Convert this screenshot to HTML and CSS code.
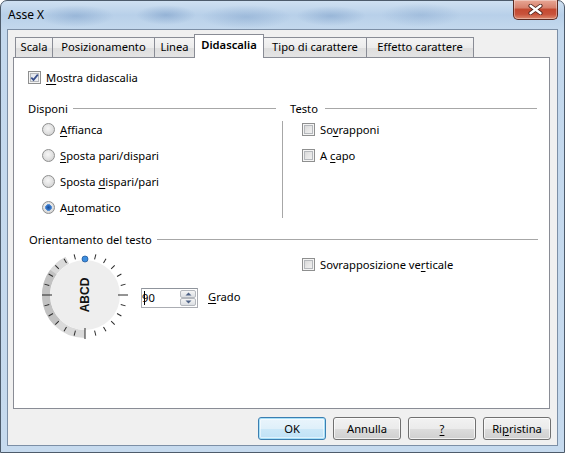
FILE: index.html
```html
<!DOCTYPE html>
<html lang="it">
<head>
<meta charset="utf-8">
<title>Asse X</title>
<link rel="stylesheet" href="styles.css">
</head>
<body>
<div class="window">
  <div class="titlebar">
    <span class="title">Asse X</span>
    <div class="close">
      <svg width="17" height="11" viewBox="0 0 17 11"><path d="M3.5 1.8 L13.5 9.2 M13.5 1.8 L3.5 9.2" fill="none" stroke="#4a1f18" stroke-width="4" stroke-linecap="round"/><path d="M3.5 1.8 L13.5 9.2 M13.5 1.8 L3.5 9.2" fill="none" stroke="#fff" stroke-width="2.4" stroke-linecap="round"/></svg>
    </div>
  </div>
  <div class="client">
    <div class="tabs">
      <div class="tab t1">Scala</div>
      <div class="tab t2">Posizionamento</div>
      <div class="tab t3">Linea</div>
      <div class="tab t4 active">Didascalia</div>
      <div class="tab t5">Tipo di carattere</div>
      <div class="tab t6">Effetto carattere</div>
    </div>
    <div class="panel">
      <div class="row first"><span class="cb checked"><svg width="11" height="11" viewBox="0 0 11 11"><path d="M2.3 5.6 L4.5 7.9 L8.8 2.6" fill="none" stroke="#394f8c" stroke-width="1.7"/></svg></span><span><u>M</u>ostra didascalia</span></div>

      <div class="cols">
        <div class="col-left">
          <div class="hdr"><span>Disponi</span><span class="rule"></span></div>
          <div class="list">
            <div class="row"><span class="rb"></span><span><u>A</u>ffianca</span></div>
            <div class="row"><span class="rb"></span><span><u>S</u>posta pari/dispari</span></div>
            <div class="row"><span class="rb"></span><span>Sposta <u>d</u>ispari/pari</span></div>
            <div class="row"><span class="rb on"></span><span>A<u>u</u>tomatico</span></div>
          </div>
        </div>
        <div class="col-right">
          <div class="hdr right-hdr"><span>Testo</span><span class="rule"></span></div>
          <div class="vbody">
            <div class="row"><span class="cb"></span><span>So<u>v</u>rapponi</span></div>
            <div class="row"><span class="cb"></span><span>A <u>c</u>apo</span></div>
          </div>
        </div>
      </div>

      <div class="hdr orient"><span>Orientamento del testo</span><span class="rule"></span></div>

      <div class="cols2">
        <div class="dialarea">
          <svg class="dial" width="96" height="96" viewBox="-48 -48 96 96">
            <circle r="39" fill="none" stroke="#dadada" stroke-width="8" stroke-dasharray="104 400" transform="rotate(90)"/>
            <circle r="39" fill="none" stroke="#c2c2c2" stroke-width="8" stroke-dasharray="55 400" transform="rotate(135)"/>
            <circle r="35" fill="#eeeeee"/>
            <g stroke="#2b2b2b" stroke-width="1">
              <line x1="33" y1="0" x2="43" y2="0"/>
              <line x1="33" y1="0" x2="43" y2="0" transform="rotate(180)"/>
              <line x1="33" y1="0" x2="44" y2="0" transform="rotate(90)"/>
              <line x1="37" y1="0" x2="42" y2="0" transform="rotate(15)"/>
              <line x1="37" y1="0" x2="42" y2="0" transform="rotate(30)"/>
              <line x1="37" y1="0" x2="42" y2="0" transform="rotate(45)"/>
              <line x1="37" y1="0" x2="42" y2="0" transform="rotate(60)"/>
              <line x1="37" y1="0" x2="42" y2="0" transform="rotate(75)"/>
              <line x1="37" y1="0" x2="42" y2="0" transform="rotate(105)"/>
              <line x1="37" y1="0" x2="42" y2="0" transform="rotate(120)"/>
              <line x1="37" y1="0" x2="42" y2="0" transform="rotate(135)"/>
              <line x1="37" y1="0" x2="42" y2="0" transform="rotate(150)"/>
              <line x1="37" y1="0" x2="42" y2="0" transform="rotate(165)"/>
              <line x1="37" y1="0" x2="42" y2="0" transform="rotate(195)"/>
              <line x1="37" y1="0" x2="42" y2="0" transform="rotate(210)"/>
              <line x1="37" y1="0" x2="42" y2="0" transform="rotate(225)"/>
              <line x1="37" y1="0" x2="42" y2="0" transform="rotate(240)"/>
              <line x1="37" y1="0" x2="42" y2="0" transform="rotate(255)"/>
              <line x1="37" y1="0" x2="42" y2="0" transform="rotate(285)"/>
              <line x1="37" y1="0" x2="42" y2="0" transform="rotate(300)"/>
              <line x1="37" y1="0" x2="42" y2="0" transform="rotate(315)"/>
              <line x1="37" y1="0" x2="42" y2="0" transform="rotate(330)"/>
              <line x1="37" y1="0" x2="42" y2="0" transform="rotate(345)"/>
            </g>
            <circle cx="0" cy="-36" r="3" fill="#3d8ee0" stroke="#245a9c" stroke-width="0.8"/>
            <text class="dialtext" x="0" y="0" transform="rotate(-90)" text-anchor="middle" dominant-baseline="central">ABCD</text>
          </svg>
          <div class="spin">
            <span class="spinval"><span class="caret"></span>90</span>
            <span class="spinbtns">
              <span class="sbtn"><svg width="7" height="4" viewBox="0 0 7 4"><path d="M0.5 3.5 L3.5 0.5 L6.5 3.5Z" fill="#4d6185"/></svg></span>
              <span class="sbtn"><svg width="7" height="4" viewBox="0 0 7 4"><path d="M0.5 0.5 L3.5 3.5 L6.5 0.5Z" fill="#4d6185"/></svg></span>
            </span>
          </div>
          <span class="grado"><u>G</u>rado</span>
        </div>
        <div class="col-right2">
          <div class="row"><span class="cb"></span><span>Sovrapposizione ve<u>r</u>ticale</span></div>
        </div>
      </div>
    </div>
    <div class="buttons">
      <div class="btn default">OK</div>
      <div class="btn">Annulla</div>
      <div class="btn"><u>?</u></div>
      <div class="btn">Ri<u>p</u>ristina</div>
    </div>
  </div>
</div>
</body>
</html>
```
FILE: styles.css
```css
* { box-sizing: border-box; }
html, body { margin: 0; padding: 0; }
body {
  width: 565px;
  height: 453px;
  overflow: hidden;
  background: #ffffff;
  font-family: "Noto Sans", "Open Sans", sans-serif;
  font-size: 11.2px;
  color: #000;
}
u { text-decoration: underline; text-underline-offset: 2px; text-decoration-thickness: 1px; }

.window {
  width: 565px;
  height: 453px;
  display: flex;
  flex-direction: column;
  border: 1px solid #4d5b6b;
  border-radius: 7px 7px 0 0;
  padding: 0 6px 6px 6px;
  background:
    radial-gradient(ellipse 38px 11px at 75px 15px, rgba(95,135,185,.35), rgba(95,135,185,0)),
    radial-gradient(ellipse 30px 10px at 165px 14px, rgba(95,135,185,.40), rgba(95,135,185,0)),
    radial-gradient(ellipse 45px 12px at 245px 16px, rgba(95,135,185,.30), rgba(95,135,185,0)),
    radial-gradient(ellipse 35px 10px at 330px 15px, rgba(95,135,185,.35), rgba(95,135,185,0)),
    radial-gradient(ellipse 40px 12px at 420px 14px, rgba(95,135,185,.25), rgba(95,135,185,0)),
    linear-gradient(to bottom, #cfe0f1 0px, #b8d0e9 14px, #c3d8ed 28px, #c6daee 100%);
}

.titlebar {
  height: 28px;
  display: flex;
  align-items: flex-start;
  flex: none;
}
.title {
  margin-left: 1px;
  line-height: 28px;
  font-size: 12px;
  color: #000;
}
.close {
  margin-left: auto;
  margin-top: -1px;
  width: 45px;
  height: 20px;
  border: 1px solid #5b2a22;
  border-top: none;
  border-radius: 0 0 5px 5px;
  background: linear-gradient(to bottom, #e8a795 0%, #d7826e 40%, #c44a31 50%, #c8523b 75%, #dd8a6e 100%);
  box-shadow: inset 0 0 0 1px rgba(255,255,255,.35);
  display: flex;
  align-items: center;
  justify-content: center;
}

.client {
  flex: 1;
  display: flex;
  flex-direction: column;
  background: #f0f0f0;
  border: 1px solid #7c8fa6;
  padding: 4px 7px 0 5px;
}

.tabs {
  display: flex;
  align-items: flex-end;
  height: 23px;
  padding-left: 2px;
  flex: none;
}
.tab {
  height: 20px;
  border: 1px solid #898c95;
  border-bottom: none;
  margin-left: -1px;
  background: linear-gradient(to bottom, #f4f4f4 0%, #ececec 50%, #dedede 51%, #e4e4e4 100%);
  text-align: center;
  line-height: 18px;
  color: #000;
  white-space: nowrap;
}
.tab.t1 { margin-left: 0; width: 38px; }
.tab.t2 { width: 103px; }
.tab.t3 { width: 41px; }
.tab.t4 { width: 70px; }
.tab.t5 { width: 104px; }
.tab.t6 { width: 108px; }
.tab.active {
  height: 24px;
  margin-bottom: -1px;
  background: #ffffff;
  font-weight: 600;
  line-height: 20px;
  position: relative;
  z-index: 1;
}

.panel {
  height: 352px;
  flex: none;
  background: #ffffff;
  border: 1px solid #898c95;
  padding: 11px 11px 0 14px;
}

.row {
  height: 16px;
  display: flex;
  align-items: center;
  gap: 5px;
  white-space: nowrap;
}

.cb {
  width: 13px;
  height: 13px;
  flex: none;
  border: 1px solid #8e8f8f;
  background: linear-gradient(135deg, #d2d2d2 0%, #e6e6e6 50%, #f6f6f6 100%);
  box-shadow: inset 0 0 0 1px #f4f4f4, inset 0 0 0 2px #b5b8bc;
  display: flex;
  align-items: center;
  justify-content: center;
}
.cb.checked {
  background: linear-gradient(135deg, #dfe3ea 0%, #f0f2f6 100%);
}
.rb {
  width: 13px;
  height: 13px;
  flex: none;
  border-radius: 50%;
  border: 1px solid #8e8f8f;
  background: radial-gradient(circle at 45% 40%, #f6f6f6 0%, #e4e4e4 45%, #c8c8c8 100%);
  margin-left: 14px;
}
.rb.on {
  background:
    radial-gradient(circle at 50% 50%, #1c4f94 0px, #2f6cc0 2px, #6aa0dc 3.4px, rgba(255,255,255,0) 3.6px),
    radial-gradient(circle at 45% 40%, #f6f6f6 0%, #e4e4e4 45%, #c8c8c8 100%);
}

.cols, .cols2 {
  display: grid;
  grid-template-columns: 248px 255px;
  column-gap: 6px;
}
.cols { margin-top: 15px; }

.hdr {
  height: 16px;
  display: flex;
  align-items: center;
  gap: 5px;
  white-space: nowrap;
}
.hdr .rule {
  flex: 1;
  height: 1px;
  background: #a7a7a7;
}
.right-hdr { padding-left: 8px; gap: 7px; }

.list {
  margin-top: 5px;
  padding-bottom: 3px;
  display: flex;
  flex-direction: column;
  gap: 10px;
}
.col-right {
  display: flex;
  flex-direction: column;
}
.vbody {
  flex: 1;
  margin-top: 5px;
  border-left: 1px solid #a7a7a7;
  padding-left: 19px;
  display: flex;
  flex-direction: column;
  gap: 10px;
}

.orient { margin-top: 13px; margin-left: 1px; }

.dialarea {
  display: flex;
  align-items: center;
  height: 96px;
}
.dial { margin-left: 9px; flex: none; }
.dialtext {
  font-family: "Liberation Sans", Arial, sans-serif;
  font-weight: bold;
  font-size: 12px;
  fill: #111;
}
.spin {
  margin-left: 8px;
  margin-top: 5px;
  width: 57px;
  height: 20px;
  border: 1px solid #abadb3;
  border-top-color: #8f949c;
  background: #fff;
  display: flex;
  align-items: center;
  justify-content: space-between;
  padding: 0 1px 0 2px;
}
.spinval {
  display: flex;
  align-items: center;
}
.caret {
  width: 1px;
  height: 14px;
  background: #000;
  margin-right: -3px;
  position: relative;
  z-index: 1;
}
.spinbtns {
  display: flex;
  flex-direction: column;
}
.sbtn {
  width: 16px;
  height: 8px;
  border: 1px solid #b4b8be;
  border-radius: 2px;
  background: linear-gradient(to bottom, #f5f5f5, #dcdfe3);
  display: flex;
  align-items: center;
  justify-content: center;
}
.grado { margin-left: 10px; margin-top: 3px; }

.col-right2 {
  padding-left: 20px;
  padding-top: 9px;
}

.buttons {
  display: flex;
  justify-content: flex-end;
  gap: 7px;
  margin-top: 8px;
  margin-right: -1px;
  flex: none;
}
.btn {
  width: 68px;
  height: 23px;
  border: 1px solid #707070;
  border-radius: 3px;
  background: linear-gradient(to bottom, #f2f2f2 0%, #ebebeb 50%, #dddddd 51%, #cfcfcf 100%);
  box-shadow: inset 0 0 0 1px rgba(255,255,255,.7);
  display: flex;
  align-items: center;
  justify-content: center;
  white-space: nowrap;
}
.btn.default {
  border-color: #3c7fb1;
  box-shadow: inset 0 0 0 1px #a8e0f8, inset 0 0 0 2px rgba(255,255,255,.5);
  background: linear-gradient(to bottom, #eaf5fc 0%, #dff0fa 50%, #cce8f8 51%, #bfe1f6 100%);
}
```
